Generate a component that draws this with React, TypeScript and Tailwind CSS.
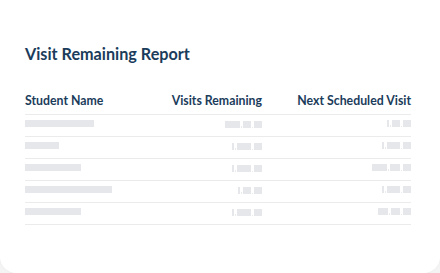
import React from "react";

type Seg = number | "," | ".";

const rows: { name: number; visits: Seg[]; next: Seg[] }[] = [
  { name: 69, visits: [15, ",", 8, ".", 8], next: [2, ",", 8, ".", 8] },
  { name: 34, visits: [2, ",", 14, ".", 8], next: [2, ",", 13, ".", 8] },
  { name: 56, visits: [2, ",", 14, ".", 8], next: [15, ",", 10, ".", 8] },
  { name: 87, visits: [2, ",", 8, ".", 8], next: [2, ",", 13, ".", 8] },
  { name: 56, visits: [2, ",", 14, ".", 8], next: [10, ",", 9, ".", 8] },
];

function Placeholder({ segs }: { segs: Seg[] }) {
  return (
    <span className="flex h-[7px] items-end">
      {segs.map((s, i) =>
        typeof s === "number" ? (
          <span key={i} className="block h-[7px] bg-[#e5e7eb]" style={{ width: s }} />
        ) : (
          <span key={i} className="flex h-[7px] w-[3px] items-end justify-center">
            <span className={s === "," ? "block h-[2px] w-[1px] bg-[#e9ebee]" : "block h-[1px] w-[1px] bg-[#e9ebee]"} />
          </span>
        )
      )}
    </span>
  );
}

export default function App() {
  return (
    <div className="h-[273px] w-[440px] bg-[#f4f4f4]" style={{ fontFamily: "Lato, 'Open Sans', sans-serif" }}>
      <div className="h-[273px] w-[440px] rounded-b-[16px] bg-white pl-[25px] pr-[29px] pt-[44px] shadow-[0_0_2px_rgba(0,0,0,0.06)]">
        <h1 className="text-[16.2px] font-bold leading-[20px] text-[#1b3c5b]">Visit Remaining Report</h1>
        <div className="mt-[29px]">
          <div className="grid grid-cols-[1fr_120px_149px] border-b-[1.5px] border-[#ebebeb] pb-[6px] text-[12.3px] font-bold leading-[15px] text-[#1b3c5b]">
            <div>Student Name</div>
            <div className="text-right">Visits Remaining</div>
            <div className="text-right">Next Scheduled Visit</div>
          </div>
          {rows.map((r, i) => (
            <div key={i} className="grid h-[22px] grid-cols-[1fr_120px_149px] items-start border-b-[1.5px] border-[#ebebeb]">
              <div className="pt-[5px]">
                <span className="block h-[7px] bg-[#e5e7eb]" style={{ width: r.name }} />
              </div>
              <div className="flex items-start justify-end pt-[6px]">
                <Placeholder segs={r.visits} />
              </div>
              <div className="flex items-start justify-end pt-[5px]">
                <Placeholder segs={r.next} />
              </div>
            </div>
          ))}
        </div>
      </div>
    </div>
  );
}
